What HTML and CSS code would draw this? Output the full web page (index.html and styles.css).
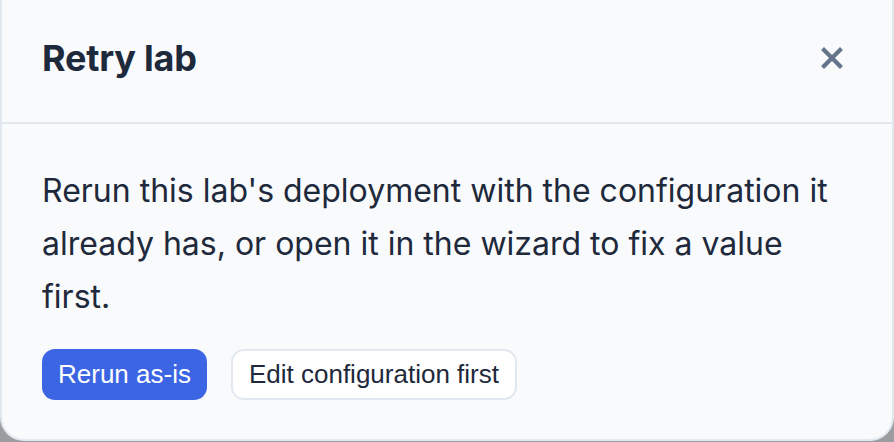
FILE: index.html
```html
<!DOCTYPE html>
<html lang="en">
<head>
<meta charset="utf-8">
<title>Retry lab</title>
<link rel="stylesheet" href="styles.css">
</head>
<body>
<div class="modal">
  <div class="modal-header">
    <h2 class="modal-title">Retry lab</h2>
    <button class="close-btn" aria-label="Close">
      <svg width="24" height="24" viewBox="0 0 24 24"><path d="M4 4 L20 20 M20 4 L4 20" stroke="#64748b" stroke-width="4.2" stroke-linecap="square" fill="none"/></svg>
    </button>
  </div>
  <div class="modal-body">
    <p class="message">Rerun this lab's deployment with the configuration it already has, or open it in the wizard to fix a value first.</p>
    <div class="actions">
      <button class="btn btn-primary">Rerun as-is</button>
      <button class="btn btn-secondary">Edit configuration first</button>
    </div>
  </div>
</div>
</body>
</html>
```
FILE: styles.css
```css
* { box-sizing: border-box; }
html, body { margin: 0; padding: 0; }
body {
  width: 894px;
  height: 442px;
  background: #9a9ca0;
  font-family: "Inter", "Noto Sans", sans-serif;
  overflow: hidden;
}
.modal {
  width: 894px;
  height: 441px;
  background: #f8fafc;
  border: 2px solid #e2e8f0;
  border-top: none;
  border-radius: 0 0 24px 24px;
  display: flex;
  flex-direction: column;
}
.modal-header {
  height: 124px;
  border-bottom: 2px solid #e2e8f0;
  display: flex;
  align-items: center;
  justify-content: space-between;
  padding: 0 48px 6px 40px;
}
.modal-title {
  margin: 0;
  font-size: 36px;
  font-weight: 700;
  color: #1e293b;
  letter-spacing: -0.2px;
}
.close-btn {
  background: none;
  border: none;
  padding: 0;
  width: 24px;
  height: 24px;
  display: flex;
  cursor: pointer;
}
.modal-body {
  padding: 40px 40px 0 40px;
}
.message {
  margin: 0;
  font-size: 32px;
  line-height: 53px;
  color: #1e293b;
}
.actions {
  display: flex;
  gap: 24px;
  margin-top: 26px;
}
.btn {
  font-family: "Liberation Sans", Arial, sans-serif;
  font-size: 26px;
  height: 51px;
  padding: 0 16px;
  border-radius: 13px;
  cursor: pointer;
}
.btn-primary {
  background: #3b65e3;
  color: #ffffff;
  border: none;
}
.btn-secondary {
  background: #ffffff;
  color: #1e293b;
  border: 2px solid #e2e8f0;
}
```
